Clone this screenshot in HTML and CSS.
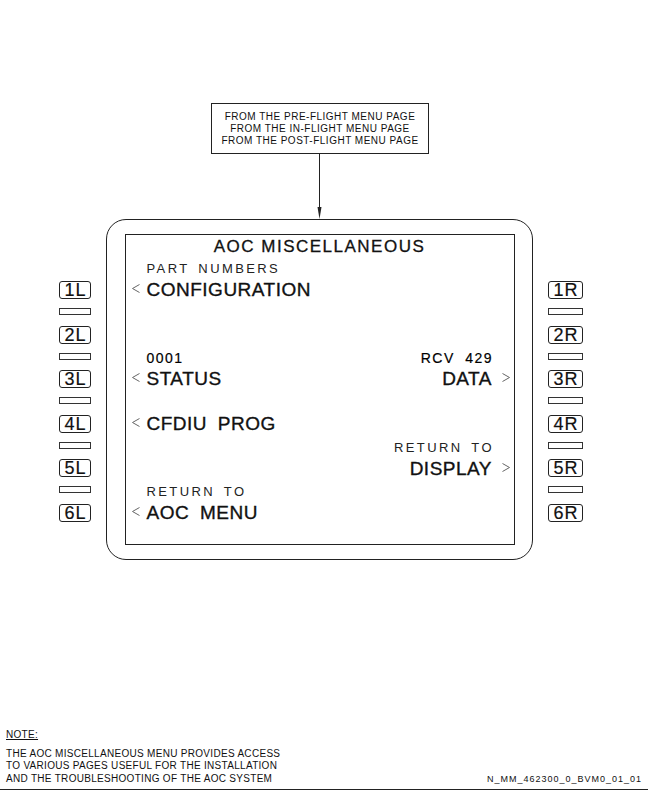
FILE: index.html
```html
<!DOCTYPE html>
<html lang="en">
<head>
    <meta charset="UTF-8">
    <meta name="viewport" content="width=device-width, initial-scale=1.0">
    <title>AOC Miscellaneous</title>
    <link rel="stylesheet" href="styles.css">
</head>
<body>
    <div class="diagram">
        <div class="source">
            FROM THE PRE-FLIGHT MENU PAGE<br>
            FROM THE IN-FLIGHT MENU PAGE<br>
            FROM THE POST-FLIGHT MENU PAGE
        </div>
        <svg class="arrow" width="8" height="65" viewBox="0 0 8 65">
            <line x1="3.5" y1="0" x2="3.5" y2="55" stroke="#222" stroke-width="1"/>
            <polygon points="1.5,53 5.5,53 3.5,65" fill="#222"/>
        </svg>

        <div class="mcdu">
            <div class="keys keys-left">
                <div class="key">1L</div><div class="sep"></div>
                <div class="key">2L</div><div class="sep"></div>
                <div class="key">3L</div><div class="sep"></div>
                <div class="key">4L</div><div class="sep"></div>
                <div class="key">5L</div><div class="sep"></div>
                <div class="key">6L</div>
            </div>

            <div class="frame">
                <div class="screen">
                    <div class="title">AOC MISCELLANEOUS</div>

                    <div class="lsk">
                        <div class="small"><span>PART NUMBERS</span></div>
                        <div class="big">
                            <span class="left"><svg class="chev" viewBox="0 0 8 9"><polyline points="7.5,0.5 0.5,4.5 7.5,8.5"/></svg>CONFIGURATION</span>
                        </div>
                    </div>

                    <div class="lsk">
                        <div class="small"></div>
                        <div class="big"></div>
                    </div>

                    <div class="lsk">
                        <div class="small num"><span>0001</span><span>RCV 429</span></div>
                        <div class="big">
                            <span class="left"><svg class="chev" viewBox="0 0 8 9"><polyline points="7.5,0.5 0.5,4.5 7.5,8.5"/></svg>STATUS</span>
                            <span class="right">DATA<svg class="chev" viewBox="0 0 8 9"><polyline points="0.5,0.5 7.5,4.5 0.5,8.5"/></svg></span>
                        </div>
                    </div>

                    <div class="lsk">
                        <div class="small"></div>
                        <div class="big">
                            <span class="left"><svg class="chev" viewBox="0 0 8 9"><polyline points="7.5,0.5 0.5,4.5 7.5,8.5"/></svg>CFDIU PROG</span>
                        </div>
                    </div>

                    <div class="lsk">
                        <div class="small"><span></span><span>RETURN TO</span></div>
                        <div class="big">
                            <span></span>
                            <span class="right">DISPLAY<svg class="chev" viewBox="0 0 8 9"><polyline points="0.5,0.5 7.5,4.5 0.5,8.5"/></svg></span>
                        </div>
                    </div>

                    <div class="lsk">
                        <div class="small"><span>RETURN TO</span></div>
                        <div class="big">
                            <span class="left"><svg class="chev" viewBox="0 0 8 9"><polyline points="7.5,0.5 0.5,4.5 7.5,8.5"/></svg>AOC MENU</span>
                        </div>
                    </div>
                </div>
            </div>

            <div class="keys keys-right">
                <div class="key">1R</div><div class="sep"></div>
                <div class="key">2R</div><div class="sep"></div>
                <div class="key">3R</div><div class="sep"></div>
                <div class="key">4R</div><div class="sep"></div>
                <div class="key">5R</div><div class="sep"></div>
                <div class="key">6R</div>
            </div>
        </div>
    </div>

    <div class="footer">
        <div class="note">
            <div class="note-head">NOTE:</div>
            THE AOC MISCELLANEOUS MENU PROVIDES ACCESS<br>
            TO VARIOUS PAGES USEFUL FOR THE INSTALLATION<br>
            AND THE TROUBLESHOOTING OF THE AOC SYSTEM
        </div>
        <div class="ref-code">N_MM_462300_0_BVM0_01_01</div>
    </div>
</body>
</html>
```

FILE: styles.css
```css
*, *:before, *:after {
    box-sizing: border-box;
}

body {
    margin: 0;
    height: 792px;
    overflow: hidden;
    display: flex;
    flex-direction: column;
    background: #fff;
    color: #111;
    font-family: 'Liberation Sans', Arial, sans-serif;
}

.diagram {
    width: 640px;
    padding-top: 103px;
    display: flex;
    flex-direction: column;
    align-items: center;
}

/* source note box above the unit */
.source {
    width: 218px;
    height: 51px;
    padding-top: 6.5px;
    border: 1px solid #222;
    font-size: 10px;
    line-height: 12px;
    letter-spacing: 0.5px;
    text-align: center;
}

.arrow {
    display: block;
}

.mcdu {
    align-self: stretch;
    margin-left: 2px;
    display: flex;
    justify-content: center;
    gap: 15px;
}

/* line select keys */
.keys {
    padding-top: 62px;
    display: flex;
    flex-direction: column;
}

.keys-left {
    width: 32px;
}

.keys-right {
    width: 35px;
}

.key {
    height: 18px;
    border: 1.5px solid #222;
    border-radius: 3px;
    display: flex;
    justify-content: center;
    align-items: center;
    font-size: 18px;
    line-height: 16px;
    letter-spacing: 1px;
    padding-left: 1px;
    -webkit-text-stroke: 0.2px #111;
}

.sep {
    height: 7px;
    margin: 9px 0 10.6px;
    border: 1px solid #333;
}

/* display unit */
.frame {
    width: 427px;
    height: 341px;
    padding: 13.5px 16.5px 13.5px 17.5px;
    border: 1.5px solid #222;
    border-radius: 20px;
}

.screen {
    width: 390px;
    height: 311px;
    border: 1px solid #222;
}

.title {
    height: 22px;
    padding-top: 3.6px;
    font-size: 17px;
    line-height: 18.4px;
    letter-spacing: 1.5px;
    text-align: center;
    -webkit-text-stroke: 0.3px #111;
}

.lsk {
    height: 44.6px;
}

.small {
    height: 22.76px;
    padding: 2.76px 19.6px 0 21px;
    display: flex;
    justify-content: space-between;
    font-size: 13px;
    line-height: 20px;
    letter-spacing: 2.4px;
    word-spacing: 3px;
    color: #222;
}

.small.num {
    font-size: 14px;
    letter-spacing: 1.5px;
    word-spacing: 5px;
    padding-right: 20.5px;
    color: #000;
    -webkit-text-stroke: 0.2px #000;
}

.big {
    height: 21.84px;
    padding: 0 4px 0 6px;
    display: flex;
    justify-content: space-between;
    font-size: 19px;
    line-height: 21.84px;
    letter-spacing: 0.5px;
    word-spacing: 5px;
    white-space: nowrap;
    -webkit-text-stroke: 0.35px #111;
}

.chev {
    width: 8px;
    height: 9px;
    vertical-align: 3px;
    fill: none;
    stroke: #666;
    stroke-width: 1;
}

.left .chev {
    margin-right: 7px;
}

.right .chev {
    margin-left: 9.5px;
}

/* bottom note */
.footer {
    margin-top: auto;
    margin-bottom: 2px;
    padding: 0 6px 3px;
    display: flex;
    justify-content: space-between;
    align-items: flex-end;
    border-bottom: 1px solid #222;
}

.note {
    font-size: 10px;
    line-height: 12.8px;
    letter-spacing: 0.3px;
}

.note-head {
    margin-bottom: 6.2px;
    text-decoration: underline;
}

.ref-code {
    font-size: 9px;
    line-height: 12.8px;
    letter-spacing: 1px;
}
```
